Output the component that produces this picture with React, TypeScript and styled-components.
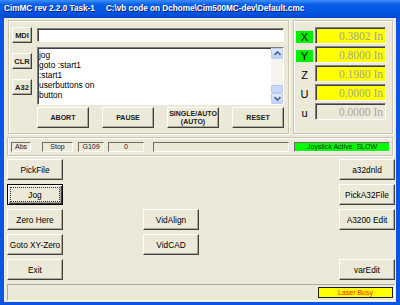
import styled, { createGlobalStyle, css } from "styled-components";

const GlobalStyle = createGlobalStyle`
  html, body {
    margin: 0;
    padding: 0;
    background: #ffffff;
  }
  * {
    box-sizing: border-box;
  }
`;

const axes = [
  { name: "X", value: "0.3802 In", active: true, enabled: true },
  { name: "Y", value: "0.8000 In", active: true, enabled: true },
  { name: "Z", value: "0.1980 In", active: false, enabled: true },
  { name: "U", value: "0.0000 In", active: false, enabled: true },
  { name: "u", value: "0.0000 In", active: false, enabled: false },
];

const listLines = ["jog", "goto :start1", ":start1", "userbuttons on", "button"];

const App = () => {
  return (
    <>
      <GlobalStyle />
      <Window>
        <TitleBar>
          <TitleText>CimMC rev 2.2.0 Task-1</TitleText>
          <TitleText>C:\vb code on Dchome\Cim500MC-dev\Default.cmc</TitleText>
        </TitleBar>
        <Client>
          <TopRow>
            <CommandFrame>
              <SideCol>
                <SmallButton>MDI</SmallButton>
                <SmallButton>CLR</SmallButton>
                <SmallButton>A32</SmallButton>
              </SideCol>
              <MainCol>
                <MdiInput />
                <ListBox>
                  <ListText>
                    {listLines.map((line) => (
                      <div key={line}>{line}</div>
                    ))}
                  </ListText>
                  <ScrollBar>
                    <ScrollArrow>
                      <svg width="7" height="5" viewBox="0 0 7 5">
                        <path d="M0.5 4 L3.5 1 L6.5 4" fill="none" stroke="#4D6185" strokeWidth="1.6" />
                      </svg>
                    </ScrollArrow>
                    <ScrollTrack>
                      <ScrollThumb />
                    </ScrollTrack>
                    <ScrollArrow>
                      <svg width="7" height="5" viewBox="0 0 7 5">
                        <path d="M0.5 1 L3.5 4 L6.5 1" fill="none" stroke="#4D6185" strokeWidth="1.6" />
                      </svg>
                    </ScrollArrow>
                  </ScrollBar>
                </ListBox>
                <ActionRow>
                  <ActionButton>ABORT</ActionButton>
                  <ActionButton>PAUSE</ActionButton>
                  <ActionButton>
                    SINGLE/AUTO
                    <br />
                    (AUTO)
                  </ActionButton>
                  <ActionButton>RESET</ActionButton>
                </ActionRow>
              </MainCol>
            </CommandFrame>
            <AxisFrame>
              {axes.map((axis) => (
                <AxisRow key={axis.name}>
                  <AxisLabel $active={axis.active}>{axis.name}</AxisLabel>
                  <AxisValue $enabled={axis.enabled}>{axis.value}</AxisValue>
                </AxisRow>
              ))}
            </AxisFrame>
          </TopRow>
          <StatusFrame>
            <StatusCell $width={20}>Abs</StatusCell>
            <StatusCell $width={31} $gap={11}>Stop</StatusCell>
            <StatusCell $width={26} $gap={5}>G109</StatusCell>
            <StatusCell $width={36} $gap={4}>0</StatusCell>
            <StatusCell $width={136} $gap={9} />
            <StatusCell $width={96} $gap={5} $green>
              Joystick Active: SLOW
            </StatusCell>
          </StatusFrame>
          <ButtonGrid>
            <PanelButton $col={1} $row={1}>PickFile</PanelButton>
            <PanelButton $col={1} $row={2} $default>
              <FocusRing>Jog</FocusRing>
            </PanelButton>
            <PanelButton $col={1} $row={3}>Zero Here</PanelButton>
            <PanelButton $col={1} $row={4}>Goto XY-Zero</PanelButton>
            <PanelButton $col={1} $row={5}>Exit</PanelButton>
            <PanelButton $col={2} $row={3}>VidAlign</PanelButton>
            <PanelButton $col={2} $row={4}>VidCAD</PanelButton>
            <PanelButton $col={3} $row={1}>a32dnld</PanelButton>
            <PanelButton $col={3} $row={2}>PickA32File</PanelButton>
            <PanelButton $col={3} $row={3}>A3200 Edit</PanelButton>
            <PanelButton $col={3} $row={5}>varEdit</PanelButton>
          </ButtonGrid>
          <StatusBar>
            <LaserBusy>Laser Busy</LaserBusy>
          </StatusBar>
        </Client>
      </Window>
    </>
  );
};

const uiFont = `"Liberation Sans", Arial, sans-serif`;

const raised = css`
  background: #ece9d8;
  border: 1px solid;
  border-color: #ffffff #404040 #404040 #ffffff;
  box-shadow: inset -1px -1px 0 #aca899;
`;

const sunken = css`
  border: 1px solid;
  border-color: #808080 #ffffff #ffffff #808080;
  box-shadow: inset 1px 1px 0 #404040;
`;

const Window = styled.div`
  width: 400px;
  height: 305px;
  display: flex;
  flex-direction: column;
  background: #0a55e6;
  font-family: ${uiFont};
  overflow: hidden;
`;

const TitleBar = styled.div`
  height: 18px;
  flex: none;
  display: flex;
  align-items: center;
  gap: 11px;
  padding: 0 4px 1px;
  background: linear-gradient(
    to bottom,
    #3d8ef8 0%,
    #0a5ee8 25%,
    #0054e3 70%,
    #0048c8 100%
  );
`;

const TitleText = styled.span`
  color: #ffffff;
  font-size: 8.2px;
  font-weight: bold;
  white-space: nowrap;
  text-shadow: 1px 1px 0 #0a1e6a;
`;

const Client = styled.div`
  flex: 1;
  margin: 0 4px 3px;
  background: #ece9d8;
  display: flex;
  flex-direction: column;
  padding: 2px 3px 0 3px;
`;

const TopRow = styled.div`
  display: flex;
  gap: 4px;
  height: 114px;
`;

const Frame = styled.div`
  border: 1px solid #c8c5b5;
  box-shadow: inset 1px 1px 0 #ffffff, 1px 1px 0 #ffffff;
`;

const CommandFrame = styled(Frame)`
  width: 281px;
  margin-left: 1px;
  display: flex;
  gap: 5px;
  padding: 6px 4px 0 3px;
`;

const SideCol = styled.div`
  width: 20px;
  display: flex;
  flex-direction: column;
  gap: 10px;
`;

const SmallButton = styled.div`
  ${raised};
  height: 16px;
  display: flex;
  align-items: center;
  justify-content: center;
  font-size: 7.5px;
  font-weight: bold;
  color: #202020;
`;

const MainCol = styled.div`
  flex: 1;
  display: flex;
  flex-direction: column;
`;

const MdiInput = styled.div`
  ${sunken};
  height: 14px;
  margin-top: 1px;
  background: #ffffff;
`;

const ListBox = styled.div`
  ${sunken};
  height: 58px;
  margin-top: 5px;
  background: #ffffff;
  display: flex;
`;

const ListText = styled.div`
  flex: 1;
  padding: 2px 0 0 1px;
  font-size: 8.4px;
  line-height: 10px;
  color: #000000;
`;

const ScrollBar = styled.div`
  width: 12px;
  display: flex;
  flex-direction: column;
  background: #f4f3ee;
`;

const ScrollArrow = styled.div`
  height: 11px;
  display: flex;
  align-items: center;
  justify-content: center;
  background: linear-gradient(to bottom, #e3ecfe, #bcd0f8);
  border: 1px solid #b8cdf6;
  border-radius: 2px;
`;

const ScrollTrack = styled.div`
  flex: 1;
  display: flex;
  flex-direction: column;
  justify-content: flex-end;
`;

const ScrollThumb = styled.div`
  height: 8px;
  background: #c9d8fa;
  border: 1px solid #b3c8f5;
  border-radius: 2px;
`;

const ActionRow = styled.div`
  display: flex;
  justify-content: space-between;
  margin-top: 2px;
  padding-right: 0;
`;

const ActionButton = styled.div`
  ${raised};
  width: 52px;
  height: 21px;
  display: flex;
  align-items: center;
  justify-content: center;
  text-align: center;
  font-size: 7px;
  font-weight: bold;
  line-height: 8px;
  color: #202020;
`;

const AxisFrame = styled(Frame)`
  flex: 1;
  display: flex;
  flex-direction: column;
  gap: 2px;
  padding: 6px 6px 0 2px;
`;

const AxisRow = styled.div`
  display: flex;
  align-items: center;
  gap: 2px;
  height: 17px;
`;

const AxisLabel = styled.div<{ $active: boolean }>`
  width: 17px;
  height: 12px;
  margin-top: 3px;
  display: flex;
  align-items: center;
  justify-content: center;
  font-size: 11px;
  color: #000000;
  background: ${({ $active }) => ($active ? "#00f000" : "transparent")};
`;

const AxisValue = styled.div<{ $enabled: boolean }>`
  ${sunken};
  flex: 1;
  height: 17px;
  display: flex;
  align-items: center;
  justify-content: flex-end;
  padding-right: 2px;
  font-family: "Liberation Serif", "Times New Roman", serif;
  font-size: 11.5px;
  color: ${({ $enabled }) => ($enabled ? "#a4a4a8" : "#a8a8a0")};
  background: ${({ $enabled }) => ($enabled ? "#ffff00" : "#ece9d8")};
`;

const StatusFrame = styled(Frame)`
  height: 19px;
  margin-top: 3px;
  margin-left: 0;
  display: flex;
  align-items: center;
  padding: 0 0 0 3px;
`;

const StatusCell = styled.div<{ $width: number; $gap?: number; $green?: boolean }>`
  width: ${({ $width }) => $width}px;
  margin-left: ${({ $gap }) => $gap ?? 0}px;
  height: 10px;
  border: 1px solid;
  border-color: #6f6d64 #ffffff #ffffff #6f6d64;
  display: flex;
  align-items: center;
  justify-content: center;
  font-size: 7px;
  color: #202020;
  background: ${({ $green }) => ($green ? "#00ff00" : "transparent")};
`;

const ButtonGrid = styled.div`
  display: grid;
  grid-template-columns: 136px 1fr 56px;
  grid-template-rows: repeat(5, 21px);
  row-gap: 4px;
  margin-top: 3px;
  margin-right: -2px;
`;

const PanelButton = styled.div<{ $col: number; $row: number; $default?: boolean }>`
  ${raised};
  grid-column: ${({ $col }) => $col};
  grid-row: ${({ $row }) => $row};
  width: 56px;
  display: flex;
  align-items: center;
  justify-content: center;
  font-size: 8.3px;
  color: #000000;
  white-space: nowrap;
  ${({ $default }) =>
    $default &&
    css`
      border: 1px solid #000000;
      box-shadow: inset 1px 1px 0 #ffffff, inset -1px -1px 0 #404040, inset -2px -2px 0 #aca899;
      padding: 2px;
    `}
`;

const FocusRing = styled.div`
  width: 100%;
  height: 100%;
  border: 1px dotted #303030;
  display: flex;
  align-items: center;
  justify-content: center;
`;

const StatusBar = styled.div`
  height: 17px;
  margin-top: 4px;
  margin-right: -2px;
  ${sunken};
  box-shadow: none;
  border-color: #aca899 #ffffff #ffffff #aca899;
  display: flex;
  align-items: center;
  justify-content: flex-end;
  padding-right: 1px;
`;

const LaserBusy = styled.div`
  width: 75px;
  height: 11px;
  border: 1px solid #202020;
  background: #ffff00;
  color: #ff2020;
  font-size: 7px;
  display: flex;
  align-items: center;
  justify-content: center;
`;

export default App;
